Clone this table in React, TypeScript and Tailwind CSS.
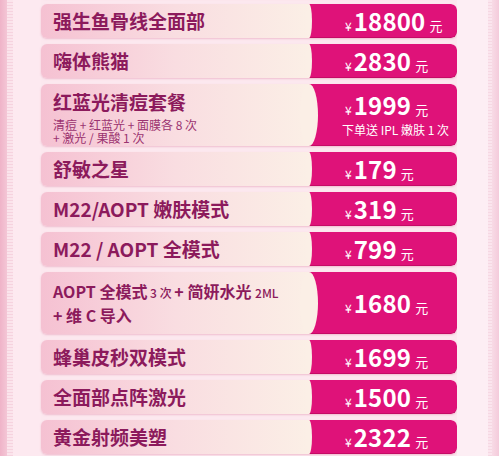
import React from 'react';

type Item = {
  title?: React.ReactNode;
  sub?: string;
  price?: string;
  note?: string;
  tall?: boolean;
};

const items: Item[] = [
  {},
  { title: '强生鱼骨线全面部', price: '18800' },
  { title: '嗨体熊猫', price: '2830' },
  {
    title: '红蓝光清痘套餐',
    sub: '清痘 + 红蓝光 + 面膜各 8 次\n+ 激光 / 果酸 1 次',
    price: '1999',
    note: '下单送 IPL 嫩肤 1 次',
    tall: true,
  },
  { title: '舒敏之星', price: '179' },
  { title: 'M22/AOPT 嫩肤模式', price: '319' },
  { title: 'M22 / AOPT 全模式', price: '799' },
  {
    title: (
      <>
        <span>AOPT 全模式</span>
        <span className="text-[12px] font-medium"> 3 次 </span>
        <span>+ 简妍水光 </span>
        <span className="text-[12px] font-medium">2ML</span>
        <br />
        <span>+ 维 C 导入</span>
      </>
    ),
    price: '1680',
    tall: true,
  },
  { title: '蜂巢皮秒双模式', price: '1699' },
  { title: '全面部点阵激光', price: '1500' },
  { title: '黄金射频美塑', price: '2322' },
];

const PriceRow = ({ item }: { item: Item }) => {
  const { title, sub, price, note, tall } = item;
  return (
    <div
      className={`flex rounded-[6px] overflow-hidden shadow-[0_1px_2px_rgba(214,110,150,0.35)] ${
        tall ? 'h-[62px]' : 'h-[34px]'
      }`}
    >
      <div
        className={`flex-1 flex flex-col pl-[12px] bg-linear-to-r from-[#f5c1d2] via-[#f9dde1] to-[#fbefe6] text-[#8c1a5c] ${
          sub ? 'justify-start pt-[4px]' : 'justify-center'
        }`}
      >
        {typeof title === 'string' ? (
          <div className={`text-[19px] font-bold ${sub ? 'leading-[28px]' : 'leading-[20px]'}`}>{title}</div>
        ) : (
          <div className="text-[16px] font-bold leading-[23px]">{title}</div>
        )}
        {sub && (
          <div className="text-[12px] leading-[13px] text-[#9b3370] mt-[2px] whitespace-pre-line">{sub}</div>
        )}
      </div>
      <div
        className={`relative w-[148px] flex flex-col justify-center pl-[36px] bg-[#df1279] rounded-r-[6px] text-white shadow-[inset_0_-1px_0_rgba(150,0,70,0.35)] before:absolute before:content-[''] before:top-0 before:h-full before:rounded-[50%] before:bg-[#fbefe6] ${
          tall ? 'before:-left-[9px] before:w-[18px]' : 'before:-left-[3px] before:w-[6px]'
        }`}
      >
        {price && (
          <div className="flex items-baseline leading-none">
            <span className="text-[12px] mr-[2px]">¥</span>
            <span className="text-[24px] font-bold tracking-[0.2px]">{price}</span>
            <span className="text-[13px] ml-[4px]">元</span>
          </div>
        )}
        {note && (
          <div className="text-[12px] leading-[14px] mt-[6px] -ml-[3px] whitespace-nowrap">{note}</div>
        )}
      </div>
    </div>
  );
};

export default function App() {
  return (
    <div
      className="w-[499px] h-[456px] overflow-hidden flex bg-[#fce8ef]"
      style={{ fontFamily: '"Noto Sans CJK SC", "Noto Sans", sans-serif' }}
    >
      <div className="w-[41px] flex shrink-0">
        <div className="w-[7px] bg-linear-to-r from-[#efb3c8] to-[#f4c6d6]" />
        <div className="w-[6px] bg-[#fbe4ec] bg-[repeating-linear-gradient(0deg,#f6d3df_0px,#f6d3df_1px,transparent_1px,transparent_3px)]" />
        <div className="flex-1 bg-[#fde9f0]" />
      </div>
      <div className="flex-1 flex flex-col gap-[6px] -mt-[36px]">
        {items.map((item, index) => (
          <PriceRow key={index} item={item} />
        ))}
      </div>
      <div className="w-[42px] flex shrink-0">
        <div className="flex-1 bg-[#fdeef4]" />
        <div className="w-[4px] bg-[#fbe5ee] bg-[repeating-linear-gradient(0deg,#f6d8e3_0px,#f6d8e3_1px,transparent_1px,transparent_3px)]" />
        <div className="w-[7px] bg-linear-to-r from-[#f8dbe6] to-[#f4cbdb]" />
      </div>
    </div>
  );
}
